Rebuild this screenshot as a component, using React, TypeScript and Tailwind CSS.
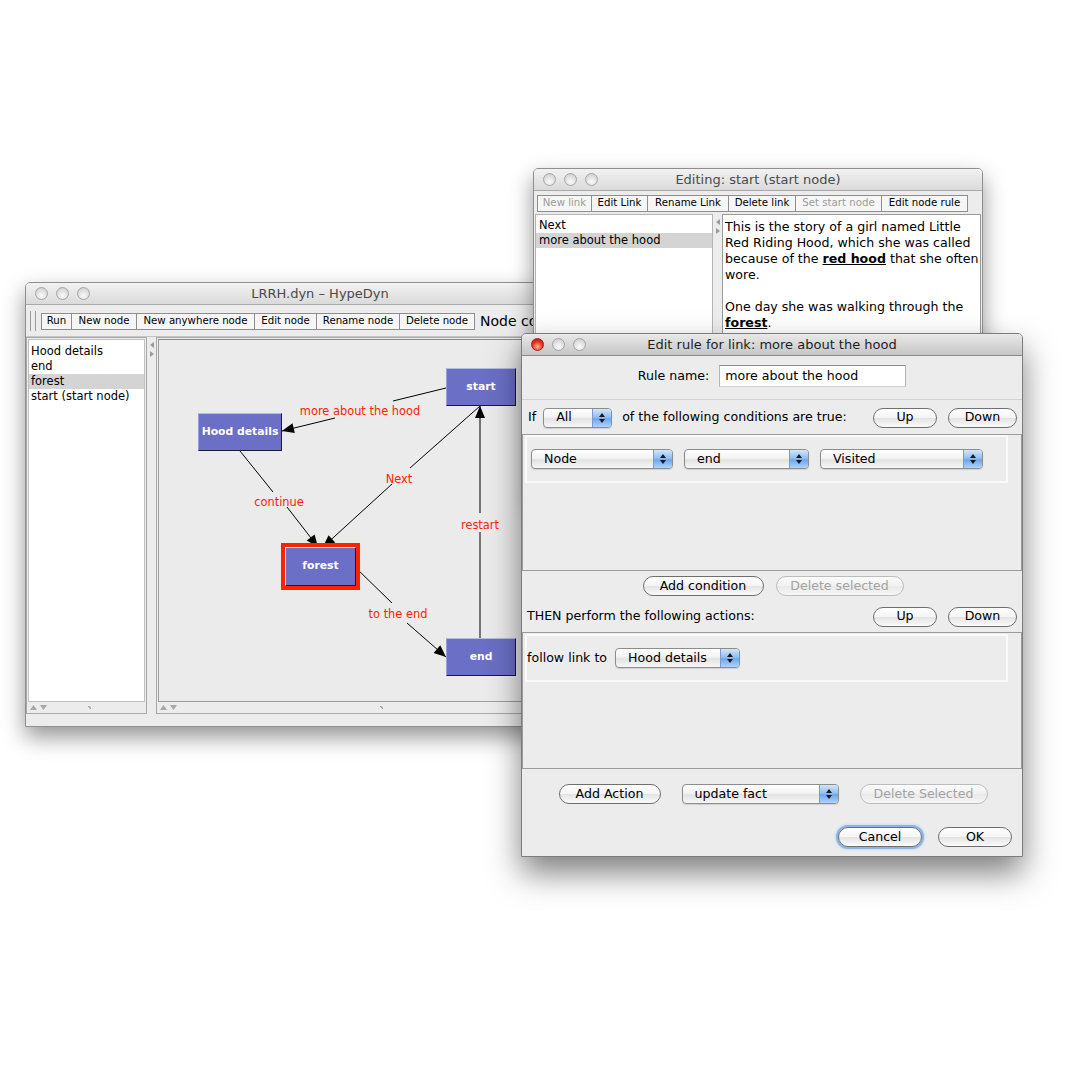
import React from "react";
import clsx from "clsx";

type Seg = [number, number, number, number];

interface Edge {
  segs: Seg[];
}

interface EdgeLabel {
  text: string;
  x: number;
  y: number;
}

// canvas coordinates (origin = top-left of the graph canvas)
const edges: Edge[] = [
  { segs: [[287, 48, 234, 61], [176, 78, 123, 91]] },
  { segs: [[81, 111, 114, 152], [128, 167, 159, 207]] },
  { segs: [[321, 66, 251, 128], [233, 144, 164, 207]] },
  { segs: [[197, 228, 233, 263], [248, 283, 287, 317]] },
  { segs: [[321, 298, 321, 192], [321, 173, 321, 66]] },
];

const labels: EdgeLabel[] = [
  { text: "more about the hood", x: 201, y: 71 },
  { text: "continue", x: 120, y: 162 },
  { text: "Next", x: 240, y: 139 },
  { text: "to the end", x: 239, y: 274 },
  { text: "restart", x: 321, y: 185 },
];

function arrowHead(x1: number, y1: number, x2: number, y2: number) {
  const a = Math.atan2(y2 - y1, x2 - x1);
  const len = 12;
  const half = 5;
  const bx = x2 - len * Math.cos(a);
  const by = y2 - len * Math.sin(a);
  const px = -Math.sin(a) * half;
  const py = Math.cos(a) * half;
  return `${x2},${y2} ${bx + px},${by + py} ${bx - px},${by - py}`;
}

function Lights({ active }: { active?: boolean }) {
  const grey =
    "h-[13px] w-[13px] rounded-full border border-[#a5a5a5] bg-[radial-gradient(circle_at_50%_70%,#fbfbfb,#d2d2d2_80%)]";
  return (
    <div className="flex items-center gap-[8px]">
      <span
        className={
          active
            ? "h-[13px] w-[13px] rounded-full border border-[#9a2419] bg-[radial-gradient(circle_at_50%_70%,#ffb0a0,#e0301c_55%,#b8140b)]"
            : grey
        }
      />
      <span className={grey} />
      <span className={grey} />
    </div>
  );
}

function TitleBar({ title, active }: { title: string; active?: boolean }) {
  return (
    <div
      className={clsx(
        "grid h-[22px] shrink-0 grid-cols-[1fr_auto_1fr] items-center border-b px-[9px]",
        active
          ? "border-[#8a8a8a] bg-[linear-gradient(#e9e9e9,#c6c6c6)] text-[#1e1e1e]"
          : "border-[#a9a9a9] bg-[linear-gradient(#f2f2f2,#dadada)] text-[#4a4a4a]"
      )}
    >
      <Lights active={active} />
      <span className="text-[13px] leading-none">{title}</span>
      <span />
    </div>
  );
}

function ToolButton({ label, w, off, first }: { label: string; w: string; off?: boolean; first?: boolean }) {
  return (
    <span
      className={clsx(
        "flex h-[17px] items-center justify-center border-y border-r border-[#8e8e8e] bg-[#f6f6f6] text-[10.2px] leading-none whitespace-nowrap",
        first && "border-l",
        off ? "text-[#9c9c9c]" : "text-black",
        w
      )}
    >
      {label}
    </span>
  );
}

function Select({ label, w }: { label: string; w: string }) {
  return (
    <div
      className={clsx(
        "flex h-[20px] shrink-0 items-stretch overflow-hidden rounded-[4px] border border-[#8d8d8d] bg-[linear-gradient(#ffffff,#f3f3f3_45%,#e2e2e2_55%,#f7f7f7)] shadow-[0_1px_1px_rgba(0,0,0,0.12)]",
        w
      )}
    >
      <span className="flex flex-1 items-center pl-[12px] text-[12.6px] leading-none text-black">{label}</span>
      <span className="flex w-[19px] flex-col items-center justify-center gap-[2px] border-l border-[#7a9ad0] bg-[linear-gradient(#d3e6fc,#93bff2_45%,#6ea6ec_55%,#aed3fb)]">
        <svg width="6" height="4" viewBox="0 0 6 4">
          <path d="M0 4 L3 0 L6 4Z" fill="#1a1a1a" />
        </svg>
        <svg width="6" height="4" viewBox="0 0 6 4">
          <path d="M0 0 L3 4 L6 0Z" fill="#1a1a1a" />
        </svg>
      </span>
    </div>
  );
}

function Pill({ label, w, off, focus }: { label: string; w: string; off?: boolean; focus?: boolean }) {
  return (
    <button
      type="button"
      className={clsx(
        "flex h-[20px] shrink-0 items-center justify-center rounded-full border text-[12.6px] leading-none",
        off
          ? "border-[#bcbcbc] bg-[linear-gradient(#fbfbfb,#f1f1f1_50%,#e9e9e9_51%,#f6f6f6)] text-[#a3a3a3]"
          : "border-[#6f6f6f] bg-[linear-gradient(#ffffff,#f4f4f4_50%,#e3e3e3_51%,#fbfbfb)] text-black",
        focus && "shadow-[0_0_0_2px_#8db4e6,0_0_3px_2px_#a9c8f0]",
        w
      )}
    >
      {label}
    </button>
  );
}

function UpDown() {
  return (
    <div className="ml-auto flex items-center gap-[11px] pr-[5px]">
      <Pill label="Up" w="w-[64px]" />
      <Pill label="Down" w="w-[69px]" />
    </div>
  );
}

function SplitArrows() {
  return (
    <div className="flex w-[9px] shrink-0 flex-col items-center pt-[4px]">
      <svg width="6" height="18" viewBox="0 0 6 18">
        <path d="M5 1 L1 4 L5 7Z" fill="#9a9a9a" />
        <path d="M1 10 L5 13 L1 16Z" fill="#9a9a9a" />
      </svg>
    </div>
  );
}

function ScrollStrip({ grip }: { grip: string }) {
  return (
    <div className="flex h-[10px] shrink-0 items-center pl-[2px]">
      <svg width="18" height="6" viewBox="0 0 18 6">
        <path d="M0 6 L3.5 1 L7 6Z" fill="#a8a8a8" />
        <path d="M10 1 L13.5 6 L17 1Z" fill="#a8a8a8" />
      </svg>
      <span className={clsx("h-[3px] w-[3px] rounded-tr-[3px] border-t border-r border-[#9a9a9a]", grip)} />
    </div>
  );
}

function GraphNode({ label, pos, w }: { label: string; pos: string; w: string }) {
  return (
    <div
      className={clsx(
        "absolute flex h-[38px] items-center justify-center border-t border-l border-r border-b border-t-[#b7b9e6] border-l-[#9a9dd8] border-r-[#1c1c2a] border-b-[#1c1c2a] bg-[#6b6fc5] text-[10.8px] font-bold text-white",
        pos,
        w
      )}
    >
      {label}
    </div>
  );
}

function GraphWindow() {
  return (
    <div className="absolute left-[25px] top-[282px] flex h-[445px] w-[590px] flex-col overflow-hidden rounded-t-[5px] border border-[#8f8f8f] bg-[#ececec] shadow-[0_10px_22px_rgba(0,0,0,0.42)]">
      <TitleBar title="LRRH.dyn – HypeDyn" />
      <div className="flex h-[32px] shrink-0 items-center border-b border-[#c4c4c4] pl-[4px] pt-[1px]">
        <span className="mr-[4px] h-[20px] w-[1px] bg-[#9c9c9c]" />
        <span className="mr-[5px] h-[20px] w-[1px] bg-[#9c9c9c]" />
        <ToolButton label="Run" w="w-[31px]" first />
        <ToolButton label="New node" w="w-[65px]" />
        <ToolButton label="New anywhere node" w="w-[118px]" />
        <ToolButton label="Edit node" w="w-[62px]" />
        <ToolButton label="Rename node" w="w-[83px]" />
        <ToolButton label="Delete node" w="w-[75px]" />
        <span className="ml-[5px] text-[14px] leading-none whitespace-nowrap text-black">Node count: 4</span>
      </div>
      <div className="flex h-[377px] shrink-0">
        <div className="flex w-[121px] shrink-0 flex-col border border-[#a9a9a9] p-[1px]">
          <div className="flex flex-1 flex-col border border-[#c2c2c2] bg-white pt-[4px] text-[11.5px] leading-[15px] text-black">
            <div className="pl-[2px]">Hood details</div>
            <div className="pl-[2px]">end</div>
            <div className="bg-[#d4d4d4] pl-[2px]">forest</div>
            <div className="pl-[2px]">start (start node)</div>
          </div>
          <ScrollStrip grip="ml-[40px]" />
        </div>
        <SplitArrows />
        <div className="flex flex-1 flex-col border border-[#a9a9a9] p-[1px]">
          <div className="relative flex-1 overflow-hidden border border-t-[#8a8a8a] border-x-[#9e9e9e] border-b-[#9e9e9e] bg-[#ebebeb]">
            <svg className="absolute left-0 top-0" width="460" height="370" viewBox="0 0 460 370">
              {edges.map((e, i) => {
                const last = e.segs[e.segs.length - 1];
                return (
                  <g key={i}>
                    {e.segs.map((s, j) => (
                      <line key={j} x1={s[0]} y1={s[1]} x2={s[2]} y2={s[3]} stroke="#000" strokeWidth="1" />
                    ))}
                    <polygon points={arrowHead(last[0], last[1], last[2], last[3])} fill="#000" />
                  </g>
                );
              })}
              {labels.map((l) => (
                <text
                  key={l.text}
                  x={l.x}
                  y={l.y}
                  textAnchor="middle"
                  dominantBaseline="central"
                  fontSize="11.4"
                  fill="#ff2200"
                >
                  {l.text}
                </text>
              ))}
            </svg>
            <GraphNode label="start" pos="left-[287px] top-[28px]" w="w-[70px]" />
            <GraphNode label="Hood details" pos="left-[39px] top-[73px]" w="w-[84px]" />
            <div className="absolute left-[122px] top-[203px] border-4 border-[#ff2200]">
              <div className="flex h-[39px] w-[71px] items-center justify-center border-t border-l border-t-[#e9eaff] border-l-[#e9eaff] border-b border-r border-b-[#1c1c2a] border-r-[#1c1c2a] bg-[#6b6fc5] text-[10.8px] font-bold text-white">
                forest
              </div>
            </div>
            <GraphNode label="end" pos="left-[287px] top-[298px]" w="w-[70px]" />
          </div>
          <ScrollStrip grip="ml-[202px]" />
        </div>
      </div>
    </div>
  );
}

function EditorWindow() {
  return (
    <div className="absolute left-[533px] top-[168px] flex h-[330px] w-[450px] flex-col overflow-hidden rounded-t-[5px] border border-[#8f8f8f] bg-[#ececec] shadow-[0_10px_22px_rgba(0,0,0,0.42)]">
      <TitleBar title="Editing: start (start node)" />
      <div className="flex h-[23px] shrink-0 items-center pl-[3px] pt-[1px]">
        <ToolButton label="New link" w="w-[55px]" off first />
        <ToolButton label="Edit Link" w="w-[56px]" />
        <ToolButton label="Rename Link" w="w-[81px]" />
        <ToolButton label="Delete link" w="w-[67px]" />
        <ToolButton label="Set start node" w="w-[86px]" off />
        <ToolButton label="Edit node rule" w="w-[86px]" />
      </div>
      <div className="flex flex-1 pl-[1px]">
        <div className="flex w-[178px] shrink-0 flex-col border border-[#b4b4b4] bg-white pt-[3px] text-[11.5px] leading-[15px] text-black">
          <div className="pl-[3px]">Next</div>
          <div className="bg-[#d4d4d4] pl-[3px]">more about the hood</div>
        </div>
        <SplitArrows />
        <div className="w-[259px] shrink-0 border border-[#9a9a9a] bg-white pl-[2px] pt-[4px] text-[12.6px] leading-[16px] whitespace-nowrap text-black">
          <div>This is the story of a girl named Little</div>
          <div>Red Riding Hood, which she was called</div>
          <div>
            because of the <span className="font-bold underline">red hood</span> that she often
          </div>
          <div>wore.</div>
          <div className="h-[16px]" />
          <div>One day she was walking through the</div>
          <div>
            <span className="font-bold underline">forest</span>.
          </div>
        </div>
      </div>
    </div>
  );
}

function RuleWindow() {
  return (
    <div className="absolute left-[521px] top-[333px] flex h-[524px] w-[502px] flex-col overflow-hidden rounded-t-[5px] border border-[#7c7c7c] bg-[#ececec] text-[12.6px] text-black shadow-[0_16px_32px_rgba(0,0,0,0.5)]">
      <TitleBar title="Edit rule for link: more about the hood" active />
      <div className="flex h-[40px] shrink-0 items-center justify-center gap-[10px]">
        <span>Rule name:</span>
        <div className="flex h-[22px] w-[187px] items-center border border-t-[#8a8a8a] border-x-[#b5b5b5] border-b-[#cfcfcf] bg-white pl-[5px]">
          more about the hood
        </div>
      </div>
      <div className="mt-[3px] border-t border-[#d2d2d2]" />
      <div className="flex h-[34px] shrink-0 items-center pl-[6px] pt-[1px]">
        <span className="mr-[7px]">If</span>
        <Select label="All" w="w-[69px]" />
        <span className="ml-[10px] whitespace-nowrap">of the following conditions are true:</span>
        <UpDown />
      </div>
      <div className="h-[137px] shrink-0 border border-[#9b9b9b]">
        <div className="ml-[2px] flex h-[48px] w-[483px] items-center gap-[11px] border-2 border-[#fafafa] pl-[4px]">
          <Select label="Node" w="w-[142px]" />
          <Select label="end" w="w-[125px]" />
          <Select label="Visited" w="w-[163px]" />
        </div>
      </div>
      <div className="flex h-[30px] shrink-0 items-center justify-center gap-[12px] pl-[2px]">
        <Pill label="Add condition" w="w-[121px]" />
        <Pill label="Delete selected" w="w-[128px]" off />
      </div>
      <div className="flex h-[31px] shrink-0 items-center pl-[5px]">
        <span className="whitespace-nowrap">THEN perform the following actions:</span>
        <UpDown />
      </div>
      <div className="h-[137px] shrink-0 border border-[#9b9b9b]">
        <div className="ml-[2px] mt-[1px] flex h-[48px] w-[483px] items-center gap-[8px] border-2 border-[#fafafa]">
          <span className="whitespace-nowrap">follow link to</span>
          <Select label="Hood details" w="w-[125px]" />
        </div>
      </div>
      <div className="flex h-[50px] shrink-0 items-center justify-center gap-[21px] pl-[2px]">
        <Pill label="Add Action" w="w-[102px]" />
        <Select label="update fact" w="w-[157px]" />
        <Pill label="Delete Selected" w="w-[128px]" off />
      </div>
      <div className="flex h-[36px] shrink-0 items-center justify-end gap-[16px] pr-[10px]">
        <Pill label="Cancel" w="w-[84px]" focus />
        <Pill label="OK" w="w-[74px]" />
      </div>
    </div>
  );
}

export default function App() {
  return (
    <div className="relative h-[1067px] w-[1067px] overflow-hidden bg-white font-['DejaVu_Sans',sans-serif]">
      <GraphWindow />
      <EditorWindow />
      <RuleWindow />
    </div>
  );
}
